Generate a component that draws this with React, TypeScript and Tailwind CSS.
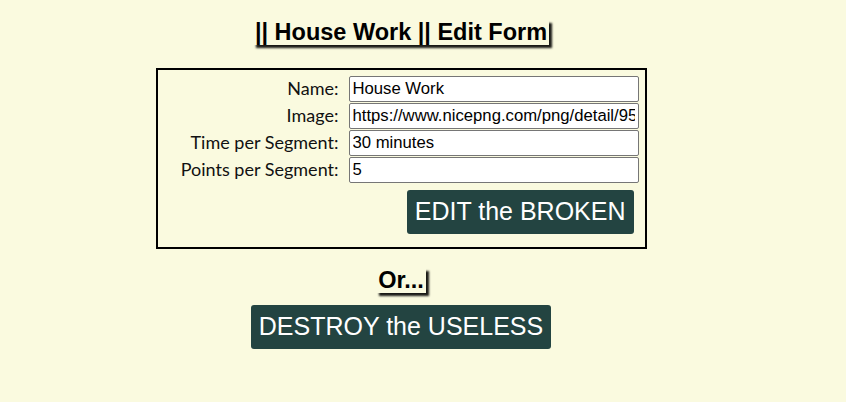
export default function App() {
  const fields = [
    { label: "Name:", value: "House Work" },
    { label: "Image:", value: "https://www.nicepng.com/png/detail/95-955541_house-work.png" },
    { label: "Time per Segment:", value: "30 minutes" },
    { label: "Points per Segment:", value: "5" },
  ];

  return (
    <div className="min-h-[402px] w-full bg-[#fafadf] font-['Liberation_Sans',Arial,sans-serif] text-black">
      <div className="flex w-[802px] flex-col items-center pt-[20px]">
        {/* title */}
        <h2 className="px-[2px] text-[23.5px] font-bold leading-[25px] shadow-[3px_3px_2px_rgba(0,0,0,0.9)]">
          || House Work || Edit Form
        </h2>

        {/* edit form */}
        <form className="mt-[23px] flex w-[491px] flex-col border-2 border-black px-[6px] pt-[6px] pb-[13px]">
          <div className="grid grid-cols-[auto_290px] justify-end gap-x-[10px] gap-y-px">
            {fields.map((f) => (
              <div key={f.label} className="contents">
                <label className="text-right font-['Lato','Open_Sans',sans-serif] text-[18px] leading-[25px] font-normal text-[#111]">
                  {f.label}
                </label>
                <input
                  readOnly
                  value={f.value}
                  className="h-[26px] w-[290px] rounded-[2px] border border-[#767676] bg-white px-[3px] text-[16.7px] text-black outline-none"
                />
              </div>
            ))}
          </div>
          <div className="mt-[7px] flex justify-end pr-[5px]">
            <button
              type="button"
              className="h-[44px] rounded-[3px] bg-[#234441] px-[8px] text-[25px] text-white"
            >
              EDIT the BROKEN
            </button>
          </div>
        </form>

        <h2 className="mt-[19px] px-[2px] text-[23.5px] font-bold leading-[25px] shadow-[3px_3px_2px_rgba(0,0,0,0.9)]">
          Or...
        </h2>

        <button
          type="button"
          className="mt-[12px] h-[44px] rounded-[3px] bg-[#234441] px-[8px] text-[25px] text-white"
        >
          DESTROY the USELESS
        </button>
      </div>
    </div>
  );
}
